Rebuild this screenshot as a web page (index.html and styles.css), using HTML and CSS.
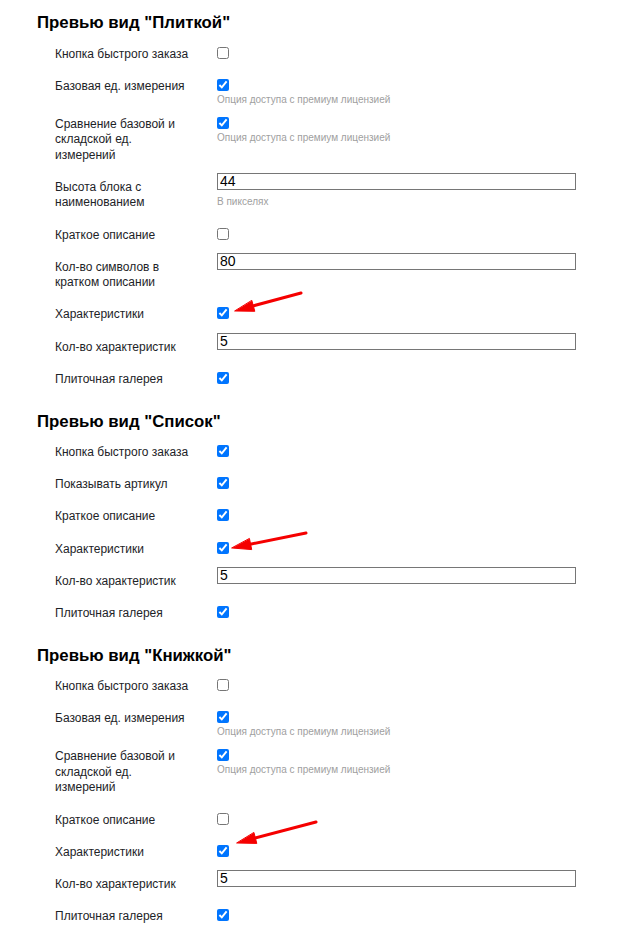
FILE: index.html
```html
<!DOCTYPE html>
<html lang="ru">
<head>
  <meta charset="UTF-8" />
  <meta name="viewport" content="width=device-width, initial-scale=1.0"/>
  <title>Настройки превью</title>
  <link rel="stylesheet" href="styles.css">
</head>
<body>

<div class="page">

  <section class="group">
    <h2>Превью вид "Плиткой"</h2>
    <div class="row">
      <div class="label">Кнопка быстрого заказа</div>
      <div class="field"><input type="checkbox" /></div>
    </div>
    <div class="row">
      <div class="label">Базовая ед. измерения</div>
      <div class="field">
        <input type="checkbox" checked />
        <div class="hint">Опция доступа с премиум лицензией</div>
      </div>
    </div>
    <div class="row">
      <div class="label">Сравнение базовой и складской ед. измерений</div>
      <div class="field">
        <input type="checkbox" checked />
        <div class="hint">Опция доступа с премиум лицензией</div>
      </div>
    </div>
    <div class="row">
      <div class="label">Высота блока с наименованием</div>
      <div class="field">
        <input type="text" value="44" />
        <div class="hint">В пикселях</div>
      </div>
    </div>
    <div class="row">
      <div class="label">Краткое описание</div>
      <div class="field"><input type="checkbox" /></div>
    </div>
    <div class="row">
      <div class="label">Кол-во символов в кратком описании</div>
      <div class="field"><input type="text" value="80" /></div>
    </div>
    <div class="row">
      <div class="label">Характеристики</div>
      <div class="field"><input type="checkbox" checked /></div>
    </div>
    <div class="row">
      <div class="label">Кол-во характеристик</div>
      <div class="field"><input type="text" value="5" /></div>
    </div>
    <div class="row">
      <div class="label">Плиточная галерея</div>
      <div class="field"><input type="checkbox" checked /></div>
    </div>
  </section>

  <section class="group">
    <h2>Превью вид "Список"</h2>
    <div class="row">
      <div class="label">Кнопка быстрого заказа</div>
      <div class="field"><input type="checkbox" checked /></div>
    </div>
    <div class="row">
      <div class="label">Показывать артикул</div>
      <div class="field"><input type="checkbox" checked /></div>
    </div>
    <div class="row">
      <div class="label">Краткое описание</div>
      <div class="field"><input type="checkbox" checked /></div>
    </div>
    <div class="row">
      <div class="label">Характеристики</div>
      <div class="field"><input type="checkbox" checked /></div>
    </div>
    <div class="row">
      <div class="label">Кол-во характеристик</div>
      <div class="field"><input type="text" value="5" /></div>
    </div>
    <div class="row">
      <div class="label">Плиточная галерея</div>
      <div class="field"><input type="checkbox" checked /></div>
    </div>
  </section>

  <section class="group">
    <h2>Превью вид "Книжкой"</h2>
    <div class="row">
      <div class="label">Кнопка быстрого заказа</div>
      <div class="field"><input type="checkbox" /></div>
    </div>
    <div class="row">
      <div class="label">Базовая ед. измерения</div>
      <div class="field">
        <input type="checkbox" checked />
        <div class="hint">Опция доступа с премиум лицензией</div>
      </div>
    </div>
    <div class="row">
      <div class="label">Сравнение базовой и складской ед. измерений</div>
      <div class="field">
        <input type="checkbox" checked />
        <div class="hint">Опция доступа с премиум лицензией</div>
      </div>
    </div>
    <div class="row">
      <div class="label">Краткое описание</div>
      <div class="field"><input type="checkbox" /></div>
    </div>
    <div class="row">
      <div class="label">Характеристики</div>
      <div class="field"><input type="checkbox" checked /></div>
    </div>
    <div class="row">
      <div class="label">Кол-во характеристик</div>
      <div class="field"><input type="text" value="5" /></div>
    </div>
    <div class="row">
      <div class="label">Плиточная галерея</div>
      <div class="field"><input type="checkbox" checked /></div>
    </div>
  </section>

  <!-- red pointer arrows drawn over the form -->
  <svg class="arrows" width="617" height="936" viewBox="0 0 617 936">
    <g fill="#f50000" stroke="#f50000" stroke-linecap="round">
      <line x1="252" y1="306.2" x2="301" y2="293" stroke-width="3" />
      <polygon points="235,311 254.8,311.3 251.9,300.7" stroke-width="1" stroke-linejoin="round" />

      <line x1="249" y1="544.5" x2="306" y2="533" stroke-width="3" />
      <polygon points="232,548 251.7,549.6 249.5,538.8" stroke-width="1" stroke-linejoin="round" />

      <line x1="254" y1="838.4" x2="316" y2="822" stroke-width="3" />
      <polygon points="237,843 256.8,843.4 254,832.8" stroke-width="1" stroke-linejoin="round" />
    </g>
  </svg>

</div>

</body>
</html>
```

FILE: styles.css
```css
body {
  margin: 0;
  font-family: 'Liberation Sans', Arial, sans-serif;
  background: #fff;
  color: #1d2327;
}

.page {
  position: relative;
  width: 617px;
  min-height: 936px;
  padding: 13px 0 0 37px;
  box-sizing: border-box;
}

.group + .group {
  margin-top: 16px;
}

.group h2 {
  margin: 0 0 5px;
  font-size: 16.8px;
  line-height: 20px;
  font-weight: bold;
  color: #000;
}

.row {
  display: grid;
  grid-template-columns: 162px 359px;
  margin-left: 18px;
  align-items: start;
}

.label {
  padding: 8.5px 26.5px 8.2px 0;
  font-size: 12px;
  line-height: 15.5px;
}

.field {
  padding: 8.5px 0 3.5px;
}

.field input[type="checkbox"] {
  display: block;
  width: 12px;
  height: 12px;
  margin: 0;
}

.field input[type="text"] {
  display: block;
  width: 359px;
  height: 17px;
  margin: -7px 0 0;
  padding: 0 2px;
  box-sizing: border-box;
  border: 1px solid #767676;
  border-radius: 0;
  font-family: inherit;
  font-size: 14px;
  color: #000;
  background: #fff;
}

.hint {
  margin-top: 3px;
  font-size: 10px;
  line-height: 11px;
  color: #a0a0a0;
}

.field input[type="text"] + .hint {
  margin-top: 6px;
}

.arrows {
  position: absolute;
  top: 0;
  left: 0;
  pointer-events: none;
}
```
